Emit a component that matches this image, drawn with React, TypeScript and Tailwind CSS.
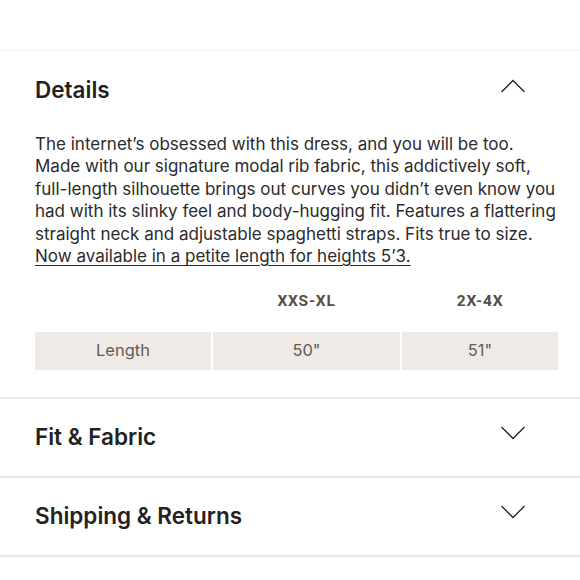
const description =
  "The internet\u2019s obsessed with this dress, and you will be too. Made with our signature modal rib fabric, this addictively soft, full-length silhouette brings out curves you didn\u2019t even know you had with its slinky feel and body-hugging fit. Features a flattering straight neck and adjustable spaghetti straps. Fits true to size.";

const sizes = [
  { label: "XXS-XL", value: '50"' },
  { label: "2X-4X", value: '51"' },
];

function Chevron({ up }: { up?: boolean }) {
  return (
    <svg width="26" height="14" viewBox="0 0 26 14" fill="none" className="shrink-0">
      <path
        d={up ? "M1.5 13L13 1.5L24.5 13" : "M1.5 1L13 12.5L24.5 1"}
        stroke="#222"
        strokeWidth="1.3"
      />
    </svg>
  );
}

function SectionHeader({ title, open }: { title: string; open?: boolean }) {
  return (
    <div className="flex h-[77px] items-center justify-between pl-[35px] pr-[54px]">
      <h3 className="text-[22.5px] font-semibold text-[#222]">{title}</h3>
      <div className="-mt-[8px]">
        <Chevron up={open} />
      </div>
    </div>
  );
}

export default function App() {
  return (
    <div className="h-[580px] w-[580px] bg-white pt-[50px] font-['Inter',sans-serif]">
      <section className="border-t border-[#f1f1f1]">
        <SectionHeader title="Details" open />
        <div className="pl-[35px] pr-[21px] pt-[5px] pb-[27px]">
          <p className="text-[17px] leading-[22.4px] text-[#2b2b2b]">
            {description}{" "}
            <a href="#" className="underline underline-offset-[3px]">
              Now available in a petite length for heights 5{"\u2019"}3.
            </a>
          </p>

          <div className="mt-[23px] grid w-[523px] grid-cols-[176px_187px_1fr] gap-x-[2px]">
            <div />
            {sizes.map((s) => (
              <div
                key={s.label}
                className="pb-[18px] text-center font-['Roboto',sans-serif] text-[15.5px] font-bold tracking-[0.05em] text-[#564d47]"
              >
                {s.label}
              </div>
            ))}
            <div className="flex h-[38px] items-center justify-center bg-[#efeae6] text-[16.5px] text-[#645b56]">
              Length
            </div>
            {sizes.map((s) => (
              <div
                key={s.label}
                className="flex h-[38px] items-center justify-center bg-[#efeae6] text-[16.5px] text-[#645b56]"
              >
                {s.value}
              </div>
            ))}
          </div>
        </div>
      </section>

      <section className="border-t-2 border-[#e8e8e8]">
        <SectionHeader title="Fit & Fabric" />
      </section>
      <section className="border-y-2 border-[#e8e8e8]">
        <SectionHeader title="Shipping & Returns" />
      </section>
    </div>
  );
}
